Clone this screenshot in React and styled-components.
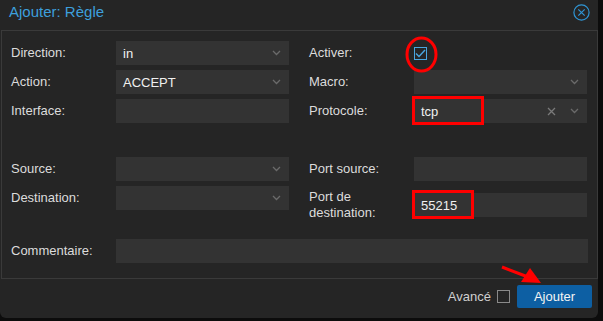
import React from 'react';
import styled, { createGlobalStyle } from 'styled-components';

const Global = createGlobalStyle`
    html, body {
        margin:0;
        padding:0;
        background:#0c0c0c;
        font-family:"Liberation Sans", Arial, sans-serif;
    }
`;

const Window = styled.div`
    position:relative;
    width:598px;
    height:318px;
    background:#252525;
    border-radius:0 0 6px 6px;
    display:flex;
    flex-direction:column;
    box-sizing:border-box;
    overflow:hidden;
`;

const TitleBar = styled.div`
    height:30px;
    display:flex;
    align-items:center;
    justify-content:space-between;
    padding:0 8px 0 9px;
    box-sizing:border-box;
`;

const Title = styled.div`
    color:#3d9fdc;
    font-size:15px;
    margin-top:-8px;
`;

const Close = styled.svg`
    width:17px;
    height:17px;
    margin-top:-5px;
`;

const Panel = styled.div`
    border:1px solid #3a3a3a;
    margin:0 0 0 1px;
    height:249px;
    box-sizing:border-box;
    padding:10px 9px 0 9px;
`;

const Columns = styled.div`
    display:grid;
    grid-template-columns:278px 278px;
    column-gap:20px;
    align-items:start;
`;

const Column = styled.div`
    display:flex;
    flex-direction:column;
    gap:5px;
`;

const Row = styled.div`
    display:flex;
    align-items:center;
    height:${p => p.tall ? '38px' : '24px'};
`;

const Label = styled.div`
    width:105px;
    flex:none;
    color:#dcdcdc;
    font-size:13px;
    line-height:16px;
`;

const Field = styled.div`
    flex:1;
    height:24px;
    background:#333333;
    display:flex;
    align-items:center;
    padding:0 8px 0 7px;
    box-sizing:border-box;
    color:#f0f0f0;
    font-size:13px;
`;

const Value = styled.span`
    flex:1;
`;

const Trigger = styled.svg`
    width:9px;
    height:6px;
`;

const Box = styled.div`
    width:13px;
    height:13px;
    box-sizing:border-box;
    border:1px solid ${p => p.checked ? '#4aa6e0' : '#8a8a8a'};
    display:flex;
    align-items:center;
    justify-content:center;
`;

const CommentRow = styled(Row)`
    margin-top:15px;
`;

const Footer = styled.div`
    flex:1;
    display:flex;
    justify-content:flex-end;
    align-items:flex-start;
    padding:6px 6px 0 0;
    gap:7px;
`;

const Avance = styled.div`
    display:flex;
    align-items:center;
    gap:6px;
    color:#d0d0d0;
    font-size:13px;
    height:23px;
`;

const Button = styled.div`
    width:75px;
    height:23px;
    background:#0d5fa3;
    border-radius:2px;
    color:#f4f4f4;
    font-size:13px;
    display:flex;
    align-items:center;
    justify-content:center;
`;

const Marks = styled.svg`
    position:absolute;
    left:0;
    top:0;
    pointer-events:none;
`;

const Chevron = () => (
    <Trigger viewBox="0 0 9 6"><path d="M1 1l3.5 3.5L8 1" fill="none" stroke="#6a6a6a" strokeWidth="1.3"/></Trigger>
);

const Select = ({value, clear}) => (
    <Field>
        <Value>{value}</Value>
        {clear && (
            <svg width="9" height="9" viewBox="0 0 9 9" style={{marginRight: 14}}>
                <path d="M1 1l7 7M8 1l-7 7" stroke="#7a7a7a" strokeWidth="1.3"/>
            </svg>
        )}
        <Chevron/>
    </Field>
);

const App = () => {
    return (
        <>
            <Global/>
            <Window>
                <TitleBar>
                    <Title>Ajouter: Règle</Title>
                    <Close viewBox="0 0 17 17">
                        <circle cx="8.5" cy="8.5" r="7.6" fill="none" stroke="#2f95d4" strokeWidth="1.2"/>
                        <path d="M5.3 5.3l6.4 6.4M11.7 5.3l-6.4 6.4" stroke="#2f95d4" strokeWidth="1.2"/>
                    </Close>
                </TitleBar>
                <Panel>
                    <Columns>
                        <Column>
                            <Row><Label>Direction:</Label><Select value="in"/></Row>
                            <Row><Label>Action:</Label><Select value="ACCEPT"/></Row>
                            <Row><Label>Interface:</Label><Field/></Row>
                            <Row/>
                            <Row><Label>Source:</Label><Select/></Row>
                            <Row><Label>Destination:</Label><Select/></Row>
                        </Column>
                        <Column>
                            <Row>
                                <Label>Activer:</Label>
                                <Box checked>
                                    <svg width="11" height="9" viewBox="0 0 11 9">
                                        <path d="M1 4.5l3 3L10 1" fill="none" stroke="#4aa6e0" strokeWidth="1.4"/>
                                    </svg>
                                </Box>
                            </Row>
                            <Row><Label>Macro:</Label><Select/></Row>
                            <Row><Label>Protocole:</Label><Select value="tcp" clear/></Row>
                            <Row/>
                            <Row><Label>Port source:</Label><Field/></Row>
                            <Row tall><Label>Port de<br/>destination:</Label><Field>55215</Field></Row>
                        </Column>
                    </Columns>
                    <CommentRow><Label>Commentaire:</Label><Field/></CommentRow>
                </Panel>
                <Footer>
                    <Avance>Avancé<Box/></Avance>
                    <Button>Ajouter</Button>
                </Footer>
                <Marks width="598" height="318" viewBox="0 0 598 318">
                    <ellipse cx="421.5" cy="54.5" rx="14.5" ry="16.5" fill="none" stroke="#f00" strokeWidth="3"/>
                    <rect x="413.5" y="97.5" width="69" height="26" fill="none" stroke="#f00" strokeWidth="3"/>
                    <rect x="413.5" y="191.5" width="59" height="26" fill="none" stroke="#f00" strokeWidth="3"/>
                    <path d="M502 267L528 277" stroke="#f00" strokeWidth="3"/>
                    <polygon points="541,283 521,282 530,268" fill="#f00"/>
                </Marks>
            </Window>
        </>
    );
}

export default App;
